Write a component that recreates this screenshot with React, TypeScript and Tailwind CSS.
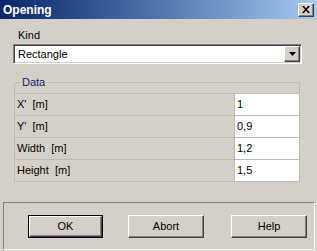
import React from 'react';

const rows = [
  { label: "X'  [m]", value: '1' },
  { label: "Y'  [m]", value: '0,9' },
  { label: 'Width  [m]', value: '1,2' },
  { label: 'Height  [m]', value: '1,5' },
];

const raised =
  'border border-t-white border-l-white border-r-[#404040] border-b-[#404040] shadow-[inset_-1px_-1px_0_#808080]';

const Button: React.FC<{ label: string; isDefault?: boolean; className?: string }> = ({
  label,
  isDefault,
  className = '',
}) => (
  <button
    className={
      (isDefault
        ? 'shrink-0 w-[75px] h-[23px] border border-black bg-[#d4d0c8] flex items-center justify-center '
        : 'shrink-0 w-[76px] h-[23px] bg-[#d4d0c8] flex items-center justify-center ' + raised + ' ') + className
    }
  >
    {isDefault ? (
      <span className={'w-full h-full flex items-center justify-center ' + raised}>{label}</span>
    ) : (
      label
    )}
  </button>
);

const App: React.FC = () => {
  return (
    <div
      className="w-[317px] h-[251px] bg-[#d4d0c8] flex flex-col overflow-hidden text-[11px] text-black"
      style={{ fontFamily: '"Liberation Sans", Arial, sans-serif' }}
    >
      {/* title bar */}
      <div className="h-[19px] flex items-center justify-between pl-[3px] pr-[3px] bg-gradient-to-r from-[#0a246a] to-[#a6caf0]">
        <span className="text-white font-bold text-[12px] leading-none">Opening</span>
        <button className={'w-[16px] h-[14px] bg-[#d4d0c8] flex items-center justify-center ' + raised}>
          <svg width="8" height="7" viewBox="0 0 8 7">
            <path d="M0 0h2l2 2.5L6 0h2L5 3.5 8 7H6L4 4.5 2 7H0l3-3.5z" fill="#000" />
          </svg>
        </button>
      </div>

      {/* kind */}
      <div className="pl-[13px] pr-[15px]">
        <div className="pl-[5px] pt-[10px] h-[25px] leading-[13px]">Kind</div>
        <div className="h-[20px] flex items-center bg-white border border-t-[#808080] border-l-[#808080] border-r-white border-b-white shadow-[inset_1px_1px_0_#404040,inset_-1px_-1px_0_#d4d0c8]">
          <span className="flex-1 pl-[4px]">Rectangle</span>
          <div className={'w-[16px] h-[16px] mr-[1px] bg-[#d4d0c8] flex items-center justify-center ' + raised}>
            <svg width="7" height="4" viewBox="0 0 7 4">
              <path d="M0 0h7L3.5 4z" fill="#000" />
            </svg>
          </div>
        </div>
      </div>

      {/* data group */}
      <div className="relative ml-[14px] mr-[17px] mt-[18px] border-l border-t border-r border-[#bdbab3] rounded-tl-[3px]">
        <span className="absolute -top-[8px] left-[5px] px-[2px] bg-[#d4d0c8] text-[#0a246a] leading-[14px]">Data</span>
        <div className="h-[10px]" />
        <div className="border-t border-[#bdbab3]">
          {rows.map((r) => (
            <div key={r.label} className="h-[22px] flex border-b border-[#bdbab3]">
              <span className="flex-1 pl-[2px] flex items-center whitespace-pre">{r.label}</span>
              <span className="w-[65px] bg-white border-l border-[#bdbab3] pl-[2px] flex items-center">{r.value}</span>
            </div>
          ))}
        </div>
      </div>

      {/* buttons panel */}
      <div className="mt-[20px] ml-[3px] mr-[2px] h-[48px] border border-t-[#808080] border-l-[#808080] border-r-white border-b-white flex items-center pl-[24px] pr-[7px]">
        <Button label="OK" isDefault />
        <Button label="Abort" className="ml-[25px]" />
        <Button label="Help" className="ml-auto" />
      </div>
    </div>
  );
};

export default App;
